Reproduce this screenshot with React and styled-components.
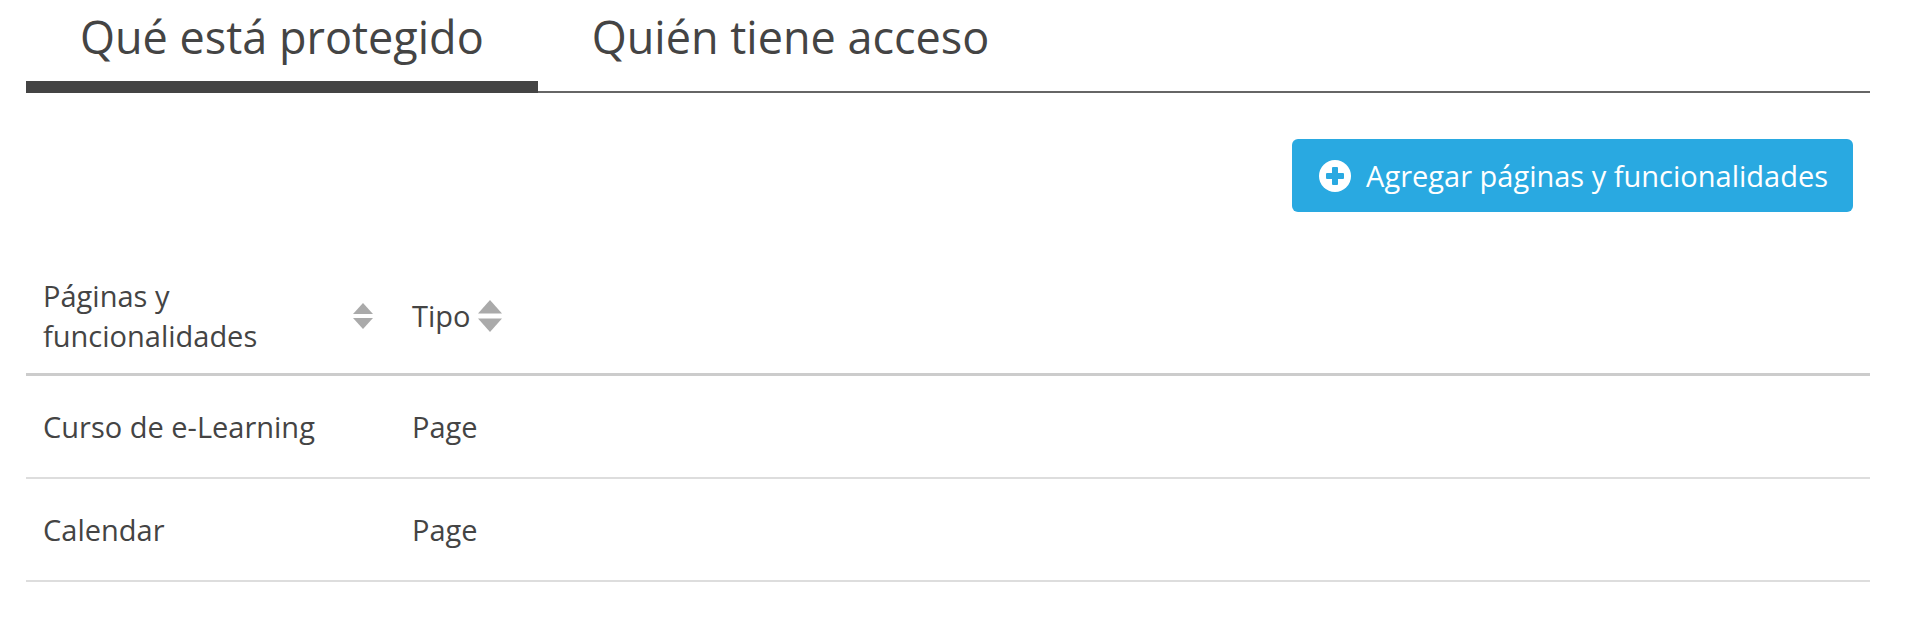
import React from "react";
import styled, { createGlobalStyle } from "styled-components";

const GlobalStyle = createGlobalStyle`
  html, body {
    margin: 0;
    padding: 0;
    background: #ffffff;
  }
  body {
    font-family: "Open Sans", "Noto Sans", "Liberation Sans", sans-serif;
    color: #444;
  }
`

const Page = styled.div`
  padding: 0 50px 0 26px;
`

const Tabs = styled.div`
  display: flex;
  border-bottom: 2px solid #666;
`

const Tab = styled.div`
  margin-bottom: -2px;
  padding: 10px 54px 17px 54px;
  font-size: 45px;
  line-height: 54px;
  color: #444;
  border-bottom: 12px solid ${(p) => (p.active ? "#444" : "transparent")};
  cursor: pointer;
`

const Toolbar = styled.div`
  display: flex;
  justify-content: flex-end;
  padding: 46px 17px 0 0;
`

const AddButton = styled.button`
  display: flex;
  align-items: center;
  gap: 15px;
  padding: 16px 25px 16px 27px;
  border: none;
  border-radius: 6px;
  background: #29a9e1;
  color: #fff;
  font-family: inherit;
  font-size: 29px;
  line-height: 41px;
  cursor: pointer;
`

const Table = styled.table`
  width: 100%;
  margin-top: 48px;
  border-collapse: collapse;
  table-layout: fixed;
`

const Th = styled.th`
  padding: 16px 22px 17px 17px;
  font-size: 29px;
  font-weight: 400;
  line-height: 40px;
  text-align: left;
  color: #444;
  border-bottom: 3px solid #ccc;
`

const HeadInner = styled.div`
  display: flex;
  align-items: center;
  justify-content: ${(p) => (p.spread ? "space-between" : "flex-start")};
  gap: 8px;
`

const Td = styled.td`
  padding: 30px 17px;
  font-size: 29px;
  line-height: 41px;
  color: #444;
  border-bottom: 2px solid #ddd;
`

const SortIcon = ({ w = 20, h = 26 }) => (
  <svg width={w} height={h} viewBox="0 0 20 26" preserveAspectRatio="none">
    <polygon points="0,11 10,0 20,11" fill="#aaa" />
    <polygon points="0,15 20,15 10,26" fill="#aaa" />
  </svg>
)

const PlusCircle = () => (
  <svg width="32" height="32" viewBox="0 0 32 32">
    <circle cx="16" cy="16" r="16" fill="#fff" />
    <rect x="13" y="7" width="6" height="18" rx="1" fill="#29a9e1" />
    <rect x="7" y="13" width="18" height="6" rx="1" fill="#29a9e1" />
  </svg>
)

const rows = [
  { name: "Curso de e-Learning", type: "Page" },
  { name: "Calendar", type: "Page" },
]

const App = () => {
  return (
    <Page>
      <GlobalStyle />
      <Tabs>
        <Tab active>Qué está protegido</Tab>
        <Tab>Quién tiene acceso</Tab>
      </Tabs>
      <Toolbar>
        <AddButton>
          <PlusCircle />
          Agregar páginas y funcionalidades
        </AddButton>
      </Toolbar>
      <Table>
        <colgroup>
          <col style={{ width: 369 }} />
          <col />
        </colgroup>
        <thead>
          <tr>
            <Th>
              <HeadInner spread>
                <span>
                  Páginas y
                  <br />
                  funcionalidades
                </span>
                <SortIcon />
              </HeadInner>
            </Th>
            <Th>
              <HeadInner>
                <span>Tipo</span>
                <SortIcon w={24} h={32} />
              </HeadInner>
            </Th>
          </tr>
        </thead>
        <tbody>
          {rows.map((r) => (
            <tr key={r.name}>
              <Td>{r.name}</Td>
              <Td>{r.type}</Td>
            </tr>
          ))}
        </tbody>
      </Table>
    </Page>
  )
}

export default App
